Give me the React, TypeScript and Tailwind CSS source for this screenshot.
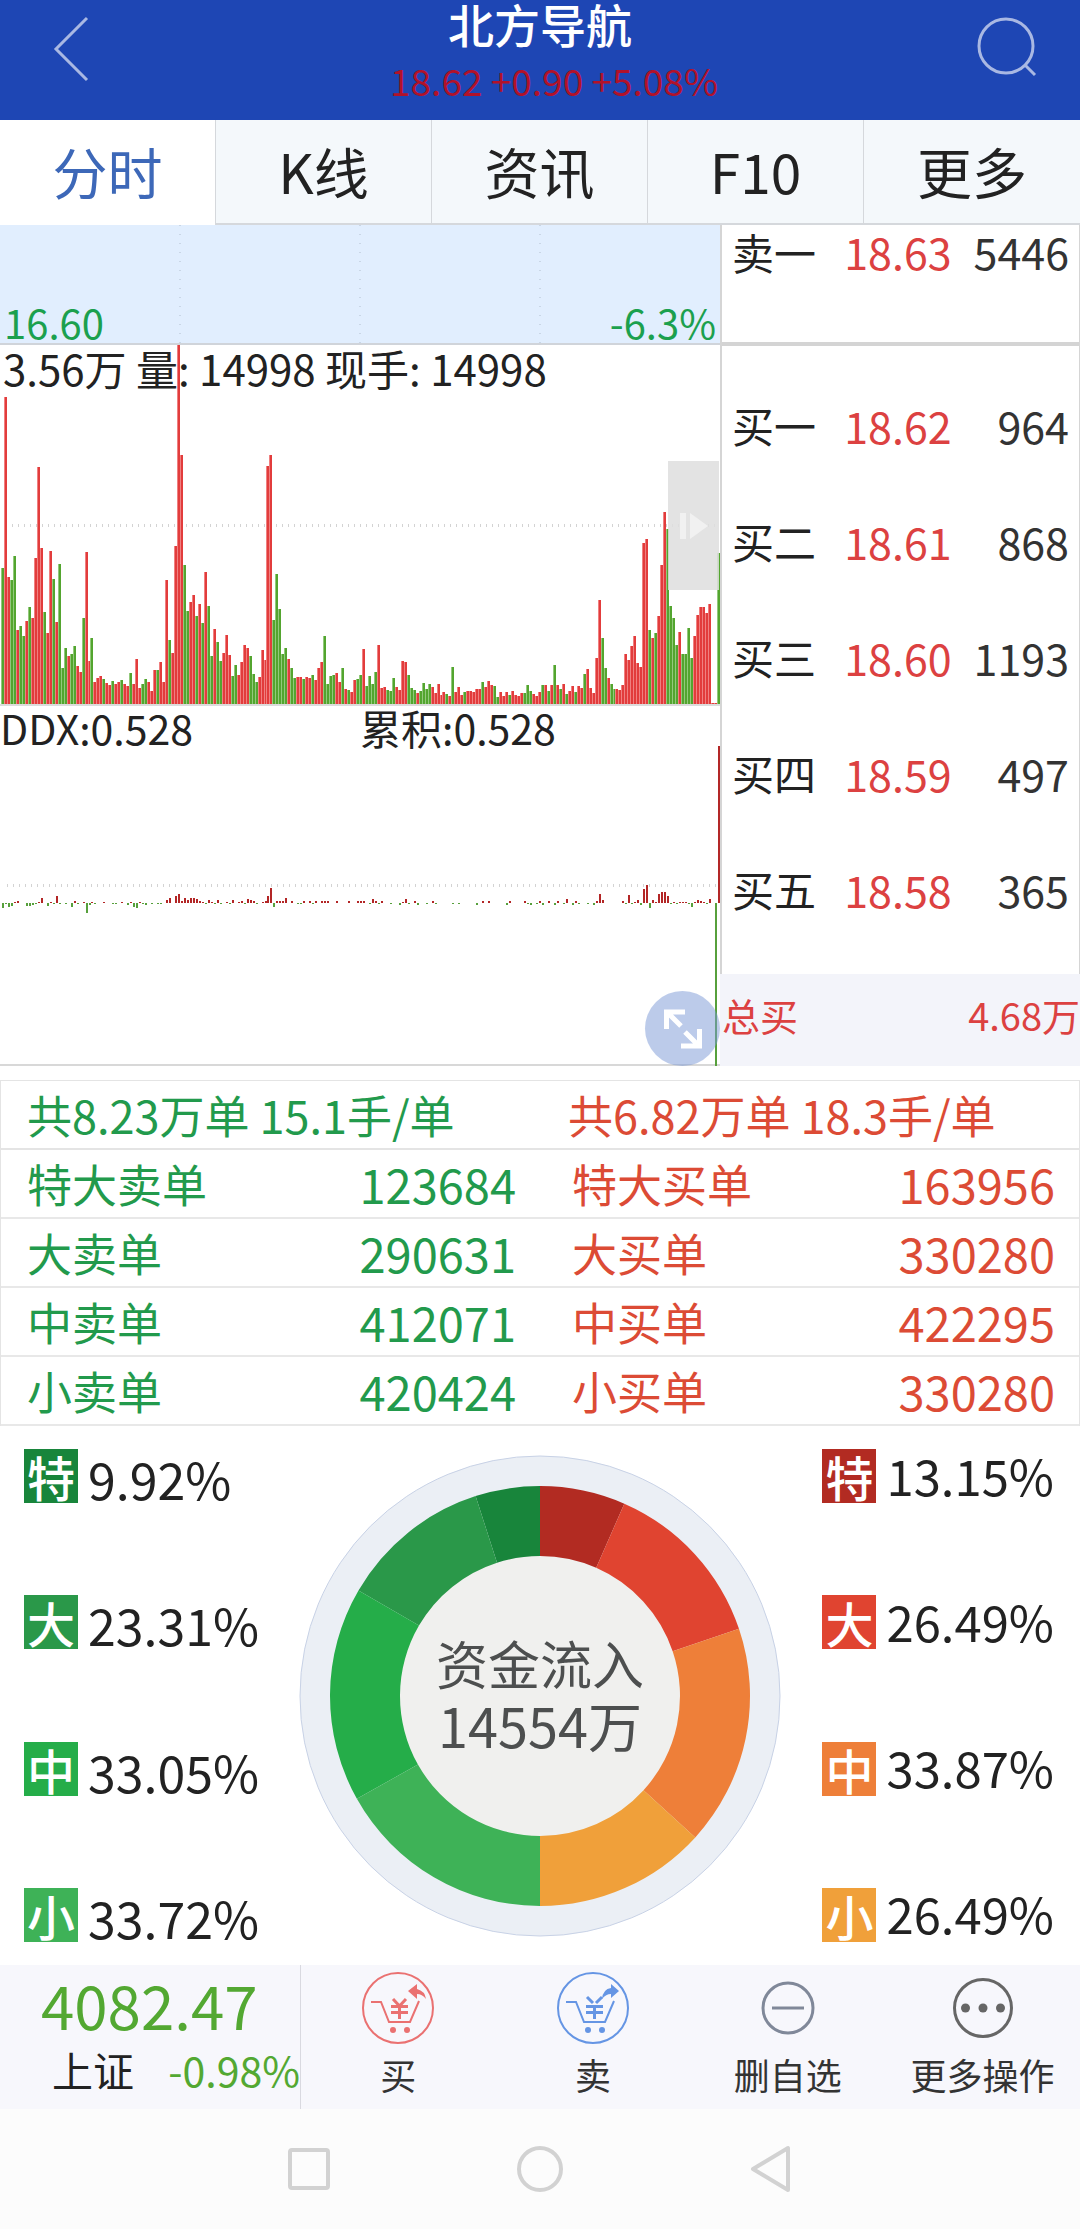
import React from 'react';

const tabs = ['分时', 'K线', '资讯', 'F10', '更多'];

const sellOrders = [{ label: '卖一', price: '18.63', volume: '5446' }];

const buyOrders = [
  { label: '买一', price: '18.62', volume: '964' },
  { label: '买二', price: '18.61', volume: '868' },
  { label: '买三', price: '18.60', volume: '1193' },
  { label: '买四', price: '18.59', volume: '497' },
  { label: '买五', price: '18.58', volume: '365' },
];

const orderRows = [
  ['特大卖单', '123684', '特大买单', '163956'],
  ['大卖单', '290631', '大买单', '330280'],
  ['中卖单', '412071', '中买单', '422295'],
  ['小卖单', '420424', '小买单', '330280'],
];

const outflow = [
  { label: '特', value: 9.92, bg: 'bg-[#18853b]', fill: '#18853b' },
  { label: '大', value: 23.31, bg: 'bg-[#2a9849]', fill: '#2a9849' },
  { label: '中', value: 33.05, bg: 'bg-[#25ad49]', fill: '#25ad49' },
  { label: '小', value: 33.72, bg: 'bg-[#3eb257]', fill: '#3eb257' },
];

const inflow = [
  { label: '特', value: 13.15, bg: 'bg-[#b22b22]', fill: '#b22b22' },
  { label: '大', value: 26.49, bg: 'bg-[#e04430]', fill: '#e04430' },
  { label: '中', value: 33.87, bg: 'bg-[#ee7f39]', fill: '#ee7f39' },
  { label: '小', value: 26.49, bg: 'bg-[#f0a03a]', fill: '#f0a03a' },
];

// One entry per minute: height of the bar, r = up, g = down
const volumeBars = `136g 307r 127r 124g 148g 74r 78g 68g 83r 97g 86r 146r 237r 156r 92g 71r 153r 125g 82r 140g
36g 56g 48r 50g 58g 38r 32r 86g 152r 43r 66g 22r 26r 28r 25g 21r 19r 23g 20r 22r
24g 20r 18r 31g 20r 45r 16r 20g 25g 22r 13r 34r 34g 42r 22r 124r 64g 51r 158r 359r
249r 139g 93g 102r 109r 88g 100r 81g 132r 98g 48g 75r 62g 43g 51r 69r 49r 28g 39g 29r
42r 59r 56r 48g 30g 22g 27r 54r 44r 238r 249r 84g 130g 95g 50g 56g 45r 36g 26g 27r
27r 25g 27r 26r 29g 24r 36r 42r 68g 20g 28g 29g 31r 22r 36g 15r 14g 12r 24r 25g
29g 55r 18g 28g 20g 32g 59r 16r 17r 14g 13g 26g 17r 14r 43r 42r 29g 16g 14g 11r
13g 21g 15g 20g 17r 11r 20r 9r 12r 10g 8r 37g 12r 17r 9r 12g 13r 13r 12r 15r
15r 22g 17r 23r 19r 18g 7g 12r 8r 12r 9g 13r 9r 8r 11r 11g 19g 13g 10r 8r
12r 19g 19r 13g 19r 39g 19r 15g 20r 10g 13r 18r 12g 18r 16r 30g 35r 16r 11r 46r
104r 66g 36g 26r 20g 15g 15r 14r 19r 50r 44r 58r 68r 41r 37r 161r 165r 74g 66r 71g
88r 139r 192r 175g 98g 86g 59g 72r 50g 50g 76g 46g 68r 89r 97r 97r 91r 100r 1r 1r
151g`
  .split(/\s+/)
  .map((s) => ({ h: parseInt(s, 10), up: s.endsWith('r') }));

// minute:value, minutes without flow are left out
const ddxBars = `0:-5 1:-1 2:-4 3:-3 4:1 5:2 8:-3 9:-3 10:-2 11:-1 12:1 13:5 15:-3 16:1 17:-1 18:7 19:-1 21:-1 23:-4 24:2 25:-1
27:1 28:-10 29:-2 30:1 31:-1 34:1 37:-1 38:-1 40:1 42:-2 43:1 44:-4 45:-5 46:1 47:-1 48:-2 50:-1 52:-1 53:-1
55:3 56:5 58:7 59:9 60:2 61:5 62:3 63:5 64:5 65:4 66:2 67:1 68:-1 69:3 70:1 71:-1 72:3 73:-1 75:1 76:-1 77:3
79:1 80:2 81:-1 82:4 83:3 84:2 85:-1 87:1 88:2 89:7 90:15 91:-4 92:2 93:2 94:2 95:5 97:2 99:-1 100:-1 101:2
103:2 104:-1 105:2 107:2 108:2 109:2 112:2 116:2 119:2 120:2 121:2 123:-1 124:4 125:2 126:-1 127:2 130:-1
133:-2 134:1 135:4 136:-1 138:2 139:-2 142:-1 144:2 145:-1 151:-1 153:-1 159:-2 161:2 163:2 169:-2 170:2
175:2 176:-1 177:-2 179:-1 180:2 181:-2 183:2 185:-2 186:2 188:-1 189:4 191:-2 192:2 193:-1 196:-1 198:-2
199:2 200:9 201:3 208:2 209:-1 210:8 211:-1 212:1 213:3 214:-2 215:14 216:18 217:-5 218:3 219:1 220:9 221:11
222:11 223:7 224:-1 225:1 226:-1 227:1 228:1 229:1 230:-1 231:-4 232:1 233:3 234:2 235:1 236:-1 237:4
239:-163 240:157`
  .split(/\s+/)
  .map((s) => s.split(':').map(Number));

const barX = (i: number) => Math.round(1 + i * 2.983);

const point = (r: number, deg: number) => {
  const a = ((deg - 90) * Math.PI) / 180;
  return `${(241 + r * Math.cos(a)).toFixed(2)} ${(241 + r * Math.sin(a)).toFixed(2)}`;
};

// Half ring of four slices; dir 1 runs clockwise from the top, -1 the other way
const halfRing = (items: typeof inflow, dir: 1 | -1) => {
  let angle = 0;
  return items.map((item) => {
    const from = angle * dir;
    angle += (item.value / 100) * 180;
    const to = angle * dir;
    const out = dir === 1 ? 1 : 0;
    const back = dir === 1 ? 0 : 1;
    return {
      fill: item.fill,
      d: `M${point(210, from)} A210 210 0 0 ${out} ${point(210, to)} L${point(140, to)} A140 140 0 0 ${back} ${point(140, from)} Z`,
    };
  });
};

const Header = () => (
  <header className="flex h-[120px] items-start justify-between bg-[#1e46b4] text-[#a9b8e3]">
    <button aria-label="返回" className="w-[104px] pt-4 pl-[52px]">
      <svg width="38" height="66" viewBox="0 0 38 66" fill="none" stroke="currentColor" strokeWidth="3">
        <path d="M35 2 L4 33 L35 64" />
      </svg>
    </button>
    <div className="text-center">
      <h1 className="text-[46px] leading-[46px] font-medium text-white">北方导航</h1>
      <p className="pt-2 pl-7 text-[37px] leading-[52px] text-[#b1122a]">18.62 +0.90 +5.08%</p>
    </div>
    <button aria-label="搜索" className="w-[104px] pt-4">
      <svg width="62" height="62" viewBox="0 0 62 62" fill="none" stroke="currentColor" strokeWidth="3">
        <circle cx="30" cy="30" r="27" />
        <path d="M49 49 L59 59" />
      </svg>
    </button>
  </header>
);

const Tabs = () => (
  <nav className="grid h-[105px] grid-cols-5">
    {tabs.map((tab, i) => (
      <button
        key={tab}
        className={
          i === 0
            ? 'border-r border-[#d5d8dc] bg-white pb-1 text-[55px] leading-none text-[#3d68b8]'
            : 'border-r border-b-2 border-[#d5d8dc] bg-[#f4f8fb] pb-[2px] text-[55px] leading-none text-[#222] last:border-r-0'
        }
      >
        {tab}
      </button>
    ))}
  </nav>
);

const PriceChart = () => (
  <div className="relative flex h-[120px] items-end justify-between border-b-2 border-[#d0d4da] bg-[#e1eefe] px-1 text-[40px] leading-[42px] text-[#1ba04e]">
    <svg className="absolute inset-0 h-full w-full" viewBox="0 0 720 118" preserveAspectRatio="none">
      {[180, 360, 540].map((x) => (
        <path key={x} d={`M${x} 0 V118`} stroke="#c9d6e6" strokeWidth="2" strokeDasharray="1 8" />
      ))}
    </svg>
    <span className="relative">16.60</span>
    <span className="relative">-6.3%</span>
  </div>
);

const VolumeChart = () => (
  <div className="relative h-[361px] border-b-2 border-[#dcdcdc]">
    <svg className="h-full w-full" viewBox="0 0 720 359" preserveAspectRatio="none" shapeRendering="crispEdges">
      <path d="M12 180 H716" stroke="#d3d3d3" strokeWidth="3" strokeDasharray="1 5" />
      {volumeBars.map((bar, i) => (
        <g key={i}>
          <rect x={barX(i)} y={359 - bar.h} width="3" height={bar.h} fill={bar.up ? '#f08080' : '#93c97c'} />
          <rect x={barX(i) + 1} y={359 - bar.h} width="2" height={bar.h} fill={bar.up ? '#e23c3c' : '#53a52f'} />
        </g>
      ))}
    </svg>
    <p className="absolute top-0 left-[3px] text-[42px] leading-[46px] text-[#222]">3.56万 量: 14998 现手: 14998</p>
    <button
      aria-label="收起盘口"
      className="absolute top-[116px] right-px flex h-[129px] w-[51px] items-center justify-center bg-[#dedede]/85"
    >
      <svg width="28" height="26" viewBox="0 0 28 26" fill="#f1f1f1">
        <rect width="6" height="26" />
        <path d="M10 0 L28 13 L10 26 Z" />
      </svg>
    </button>
  </div>
);

const DdxChart = () => (
  <div className="relative h-[360px] border-b-2 border-[#d8d8d8]">
    <svg className="h-full w-full overflow-visible" viewBox="0 0 720 358" preserveAspectRatio="none" shapeRendering="crispEdges">
      <path d="M7 179 H718" stroke="#d3d3d3" strokeWidth="3" strokeDasharray="1 5" />
      {ddxBars.map(([i, v]) => (
        <rect
          key={i}
          x={barX(i) + 1}
          y={v > 0 ? 197 - v : 197}
          width="2"
          height={Math.abs(v)}
          fill={v > 0 ? '#b32626' : '#57a03c'}
        />
      ))}
    </svg>
    <div className="absolute inset-x-0 top-0 grid grid-cols-2 text-[41px] leading-[42px] text-[#222]">
      <span>DDX:0.528</span>
      <span>累积:0.528</span>
    </div>
    <button
      aria-label="全屏"
      className="absolute right-0 -bottom-[2px] flex h-[75px] w-[75px] items-center justify-center rounded-full bg-[#7997d6]/50"
    >
      <svg width="38" height="40" viewBox="0 0 38 40" fill="none" stroke="#fff" strokeWidth="5">
        <path d="M2.5 20 V3 H21 M3 3 L17 17" />
        <path d="M35.500 20 V37 H17 M35 37 L21 23" />
      </svg>
    </button>
  </div>
);

const OrderTable = ({ orders, rowClass }: { orders: typeof buyOrders; rowClass: string }) => (
  <table className="w-full table-fixed text-[42px] leading-none">
    <tbody>
      {orders.map((o) => (
        <tr key={o.label} className={rowClass}>
          <th className="w-1/3 pl-[10px] text-left font-normal text-[#222]">{o.label}</th>
          <td className="w-[31%] text-right text-[43px] text-[#dc4141]">{o.price}</td>
          <td className="pr-[10px] text-right text-[43px] text-[#333]">{o.volume}</td>
        </tr>
      ))}
    </tbody>
  </table>
);

const OrderBook = () => (
  <aside className="flex w-1/3 flex-col">
    <div className="flex grow flex-col border-r border-l-2 border-[#d5d5d5]">
      <div className="h-[121px] border-b-4 border-[#d4d4d4]">
        <OrderTable orders={sellOrders} rowClass="h-[53px]" />
      </div>
      <div className="pt-[21px]">
        <OrderTable orders={buyOrders} rowClass="h-[116px]" />
      </div>
    </div>
    <div className="flex h-[92px] items-center justify-between bg-[#f3f4fa] pb-[10px] pl-[2px] text-[38px] leading-none text-[#dc4141]">
      <span>总买</span>
      <span>4.68万</span>
    </div>
  </aside>
);

const OrderStats = () => (
  <table className="mt-[14px] w-full table-fixed border-separate border-spacing-0 border border-b-0 border-[#e4e4e4] text-[45px] leading-none">
    <thead>
      <tr className="h-[69px]">
        <th colSpan={2} className="border-b-2 border-[#e4e4e4] pl-[26px] text-left font-normal text-[#229a4c]">
          共8.23万单 15.1手/单
        </th>
        <th colSpan={2} className="border-b-2 border-[#e4e4e4] pl-7 text-left font-normal text-[#dc4b35]">
          共6.82万单 18.3手/单
        </th>
      </tr>
    </thead>
    <tbody>
      {orderRows.map(([sell, sellCount, buy, buyCount]) => (
        <tr key={sell} className="h-[69px]">
          <td className="border-b-2 border-[#e8e8e8] pl-[26px] text-[#229a4c]">{sell}</td>
          <td className="border-b-2 border-[#e8e8e8] pr-6 text-right text-[47px] text-[#229a4c]">{sellCount}</td>
          <td className="border-b-2 border-[#e8e8e8] pl-8 text-[#dc4b35]">{buy}</td>
          <td className="border-b-2 border-[#e8e8e8] pr-6 text-right text-[47px] text-[#dc4b35]">{buyCount}</td>
        </tr>
      ))}
    </tbody>
  </table>
);

const Legend = ({ items, textClass }: { items: typeof inflow; textClass: string }) => (
  <ul className="flex flex-col justify-between">
    {items.map((item) => (
      <li key={item.label} className="flex h-[54px] items-center gap-[10px]">
        <span className={`flex h-[54px] w-[54px] items-center justify-center text-[48px] leading-[50px] font-medium text-white ${item.bg}`}>
          {item.label}
        </span>
        <span className={textClass}>{item.value.toFixed(2)}%</span>
      </li>
    ))}
  </ul>
);

const FundFlow = () => (
  <section className="relative flex h-[539px] justify-between py-[23px] pr-[26px] pl-6">
    <Legend items={outflow} textClass="pt-1 text-[50px] leading-none text-[#222]" />
    <div className="absolute inset-x-0 top-[29px] flex h-[482px] items-center justify-center">
      <svg className="absolute" width="482" height="482" viewBox="0 0 482 482">
        <circle cx="241" cy="241" r="240" fill="#ebeff5" stroke="#c8d2e6" />
        <circle cx="241" cy="241" r="141" fill="#f0f0ee" />
        {[...halfRing(inflow, 1), ...halfRing(outflow, -1)].map((slice) => (
          <path key={slice.fill} d={slice.d} fill={slice.fill} />
        ))}
      </svg>
      <div className="relative pb-1 text-center leading-[62px] text-[#4d4f4f]">
        <p className="text-[52px]">资金流入</p>
        <p className="text-[54px]">14554万</p>
      </div>
    </div>
    <Legend items={inflow} textClass="pb-1 text-[49px] leading-none text-[#222]" />
  </section>
);

const CartIcon = ({ sell }: { sell?: boolean }) => (
  <svg width="72" height="72" viewBox="0 0 72 72" fill="none" stroke="currentColor" strokeWidth="2">
    <circle cx="36" cy="36" r="35" />
    <path d="M9 30 H19 L27 50 H48 L57 29" />
    <path d="M29 34.500 H46 M29 40.500 H46 M37.500 34 V47" strokeWidth="3" />
    <path d={sell ? 'M30 25 L36 31 M45 25 L39 31' : 'M31 27 L37.500 34 L44 27'} strokeWidth="3" />
    <g fill="currentColor" stroke="none">
      <circle cx="31" cy="58" r="3" />
      <circle cx="45" cy="58" r="3" />
      {sell ? (
        <path d="M62 19 L54 12 V16 Q46 17 45 27 Q49 22 54 22 V26 Z" />
      ) : (
        <path d="M46 19 L55 12 V17 Q63 19 64 27 Q60 22 55 22 V27 Z" />
      )}
    </g>
  </svg>
);

const MinusIcon = () => (
  <svg width="54" height="54" viewBox="0 0 54 54" fill="none" stroke="currentColor" strokeWidth="3">
    <circle cx="27" cy="27" r="25" />
    <path d="M11 27 H43" />
  </svg>
);

const MoreIcon = () => (
  <svg width="60" height="60" viewBox="0 0 60 60" fill="currentColor">
    <circle cx="30" cy="30" r="28.500" fill="none" stroke="currentColor" strokeWidth="3" />
    <circle cx="12.500" cy="30" r="4.500" />
    <circle cx="30" cy="30" r="4.500" />
    <circle cx="47.500" cy="30" r="4.500" />
  </svg>
);

const actions = [
  { label: '买', color: 'text-[#ea7171]', icon: <CartIcon /> },
  { label: '卖', color: 'text-[#6595e4]', icon: <CartIcon sell /> },
  { label: '删自选', color: 'text-[#808899]', icon: <MinusIcon /> },
  { label: '更多操作', color: 'text-[#666]', icon: <MoreIcon /> },
];

const ActionBar = () => (
  <footer className="flex h-[144px] bg-[#f7f7fc]">
    <div className="w-[301px] shrink-0 border-r border-[#d9d9e0] pt-[7px] text-[#53a832]">
      <p className="pl-[41px] text-[60px] leading-[64px]">4082.47</p>
      <p className="flex justify-between pl-[52px] text-[41px] leading-[66px]">
        <span className="text-[#222]">上证</span>
        <span>-0.98%</span>
      </p>
    </div>
    <div className="grid grow grid-cols-4">
      {actions.map(({ label, color, icon }) => (
        <button key={label} className="flex flex-col items-center pt-[7px]">
          <span className={`flex h-[72px] items-center ${color}`}>{icon}</span>
          <span className="text-[36px] leading-[60px] text-[#333]">{label}</span>
        </button>
      ))}
    </div>
  </footer>
);

const SystemNav = () => (
  <nav className="flex h-[120px] items-center justify-center bg-[#fcfcfc] text-[#d2d2d2]">
    <button aria-label="最近任务" className="flex w-[231px] justify-center">
      <svg width="46" height="46" viewBox="0 0 46 46" fill="none" stroke="currentColor" strokeWidth="4">
        <rect x="4" y="4" width="38" height="38" rx="2" />
      </svg>
    </button>
    <button aria-label="主屏幕" className="flex w-[231px] justify-center">
      <svg width="46" height="46" viewBox="0 0 46 46" fill="none" stroke="currentColor" strokeWidth="4">
        <circle cx="23" cy="23" r="21" />
      </svg>
    </button>
    <button aria-label="系统返回" className="flex w-[231px] justify-center">
      <svg width="42" height="48" viewBox="0 0 42 48" fill="none" stroke="currentColor" strokeWidth="4" strokeLinejoin="round">
        <path d="M38 3 V45 L3 24 Z" />
      </svg>
    </button>
  </nav>
);

export default function App() {
  return (
    <div className="bg-white font-['Noto_Sans_CJK_SC',sans-serif]">
      <Header />
      <Tabs />
      <main>
        <div className="flex">
          <div className="w-2/3">
            <PriceChart />
            <VolumeChart />
            <DdxChart />
          </div>
          <OrderBook />
        </div>
        <OrderStats />
        <FundFlow />
      </main>
      <ActionBar />
      <SystemNav />
    </div>
  );
}
